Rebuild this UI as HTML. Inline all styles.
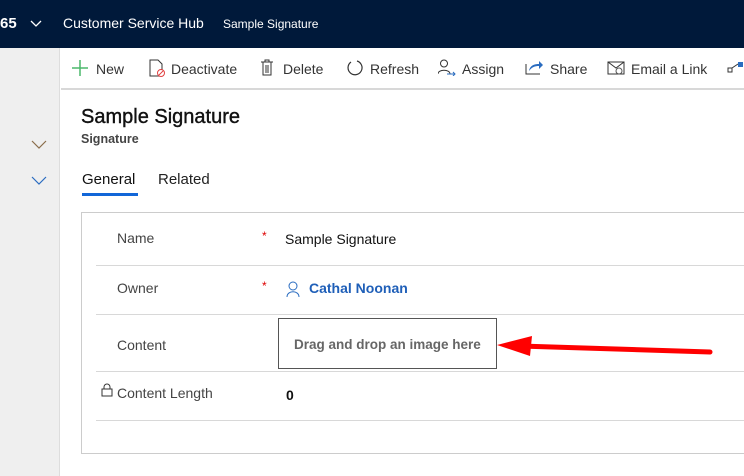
<!DOCTYPE html>
<html><head><style>
*{margin:0;padding:0;box-sizing:border-box}
body{width:744px;height:476px;overflow:hidden;background:#fff;font-family:"Liberation Sans",sans-serif;position:relative}
.top{position:absolute;left:0;top:0;width:744px;height:48px;background:#00193a;color:#fff}
.top span{position:absolute;top:15px}
.side{position:absolute;left:0;top:48px;width:60px;height:428px;background:#efefef;border-right:1px solid #ddd}
.cmd{position:absolute;left:61px;top:48px;right:0;height:42px;background:#fff;border-bottom:2px solid #d8d8d8}
.cmd span{position:absolute;top:13px;font-size:14px;color:#333}
.abs{position:absolute}
.form{position:absolute;left:81px;top:212px;width:700px;height:242px;border:1px solid #ccc}
.sep{position:absolute;left:96px;width:660px;height:1px;background:#d8d8d8}
.lbl{position:absolute;left:117px;font-size:14px;color:#444}
.req{position:absolute;left:262px;color:#d00;font-size:12px}
</style></head><body>
<div class="top">
<span style="left:0;font-size:15px;font-weight:bold">65</span>
<svg class="abs" style="left:30px;top:20px" width="12" height="8"><path d="M1 1l5 5 5-5" stroke="#fff" fill="none" stroke-width="1.3"/></svg>
<span style="left:63px;font-size:14px">Customer Service Hub</span>
<span style="left:223px;font-size:12px;top:17px">Sample Signature</span>
</div>
<div class="side">
<svg class="abs" style="left:31px;top:92px" width="16" height="10"><path d="M1 1l7 7 7-7" stroke="#8a6d4a" fill="none" stroke-width="1.2"/></svg>
<svg class="abs" style="left:31px;top:128px" width="16" height="10"><path d="M1 1l7 7 7-7" stroke="#2a6cc0" fill="none" stroke-width="1.2"/></svg>
</div>
<div class="cmd">
<svg class="abs" style="left:11px;top:12px" width="16" height="16"><path d="M8 0v16M0 8h16" stroke="#4cb86c" stroke-width="1.5"/></svg>
<span style="left:35px">New</span>
<svg class="abs" style="left:88px;top:11px" width="16" height="18"><path d="M1 1h8l4 4v12H1z" stroke="#333" fill="none"/><circle cx="12" cy="14" r="3.5" fill="#fff" stroke="#e04040"/><path d="M10 16l4-4" stroke="#e04040"/></svg>
<span style="left:110px">Deactivate</span>
<svg class="abs" style="left:200px;top:11px" width="12" height="17"><path d="M0 3h12M4 3V1h4v2M2 3v13h8V3M5 6v8M7 6v8" stroke="#333" fill="none"/></svg>
<span style="left:222px">Delete</span>
<svg class="abs" style="left:285px;top:11px" width="17" height="17"><path d="M5 3A7 7 0 1 0 11 2" stroke="#333" fill="none" stroke-width="1.2"/></svg>
<span style="left:309px">Refresh</span>
<svg class="abs" style="left:377px;top:11px" width="18" height="17"><circle cx="6" cy="4.5" r="3.5" stroke="#333" fill="none"/><path d="M0 15c0-5 12-5 12 0" stroke="#333" fill="none"/><path d="M9 15h8M15 13l2 2-2 2" stroke="#2a6cc0" fill="none"/></svg>
<span style="left:401px">Assign</span>
<svg class="abs" style="left:464px;top:11px" width="18" height="16"><path d="M1 5v10h14" stroke="#333" fill="none"/><path d="M4 12c1-6 6-7 10-7V2l4 4-4 4V7c-4 0-7 1-10 5z" fill="#2a6cc0"/></svg>
<span style="left:489px">Share</span>
<svg class="abs" style="left:546px;top:13px" width="18" height="14"><path d="M1 1h16v12H1zM1 1l8 6 8-6" stroke="#333" fill="none"/><circle cx="12" cy="10" r="3" fill="#fff" stroke="#555"/></svg>
<span style="left:570px">Email a Link</span>
<svg class="abs" style="left:666px;top:14px" width="16" height="12"><rect x="1" y="6" width="4" height="4" stroke="#333" fill="none"/><path d="M5 6l6-4" stroke="#333"/><rect x="11" y="0" width="5" height="5" fill="#2a6cc0"/></svg>
</div>
<div class="abs" style="left:81px;top:106px;font-size:20px;color:#111;-webkit-text-stroke:0.4px #111">Sample Signature</div>
<div class="abs" style="left:81px;top:132px;font-size:12.5px;font-weight:bold;color:#444">Signature</div>
<div class="abs" style="left:82px;top:171px;font-size:15px;color:#111">General</div>
<div class="abs" style="left:82px;top:193px;width:56px;height:3px;background:#1266d8"></div>
<div class="abs" style="left:158px;top:171px;font-size:15px;color:#222">Related</div>
<div class="form"></div>
<div class="lbl" style="top:230px">Name</div><div class="req" style="top:229px">*</div>
<div class="abs" style="left:285px;top:231px;font-size:14px;color:#111">Sample Signature</div>
<div class="sep" style="top:265px"></div>
<div class="lbl" style="top:280px">Owner</div><div class="req" style="top:279px">*</div>
<svg class="abs" style="left:286px;top:281px" width="14" height="16"><circle cx="7" cy="5" r="4" stroke="#2a6cc0" fill="none"/><path d="M1 16c0-7 12-7 12 0" stroke="#2a6cc0" fill="none"/></svg>
<div class="abs" style="left:309px;top:280px;font-size:14px;font-weight:bold;color:#1f5fb8">Cathal Noonan</div>
<div class="sep" style="top:314px"></div>
<div class="lbl" style="top:337px">Content</div>
<div class="abs" style="left:278px;top:318px;width:219px;height:51px;border:1px solid #555;background:#fff"></div>
<div class="abs" style="left:294px;top:337px;font-size:13.5px;font-weight:bold;color:#666">Drag and drop an image here</div>
<div class="sep" style="top:371px"></div>
<svg class="abs" style="left:101px;top:383px" width="12" height="14"><path d="M3 6V4a3 3 0 0 1 6 0v2M1 6h10v7H1z" stroke="#333" fill="none"/></svg>
<div class="lbl" style="top:385px">Content Length</div>
<div class="abs" style="left:286px;top:387px;font-size:14px;font-weight:bold;color:#111">0</div>
<div class="sep" style="top:420px"></div>
<svg class="abs" style="left:490px;top:330px" width="230" height="30"><path d="M220 22L30 16" stroke="#f00" stroke-width="5" stroke-linecap="round"/><path d="M7 15L42 6L40 26z" fill="#f00"/></svg>
</body></html>
